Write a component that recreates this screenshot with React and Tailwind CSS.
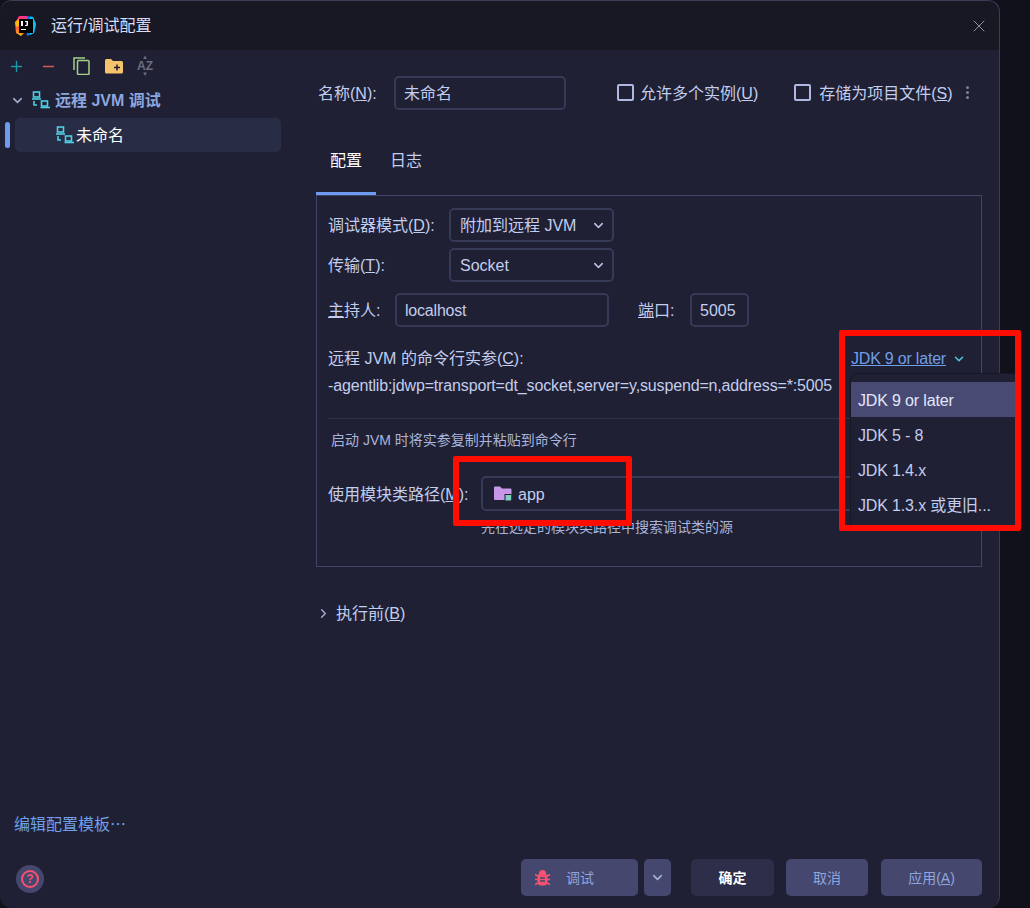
import { ChevronDown, ChevronRight, Plus, Minus, X } from 'lucide-react';

function JetBrainsLogo() {
  return (
    <svg width="22" height="22" viewBox="0 0 22 22" className="shrink-0">
      <defs>
        <linearGradient id="ijLeft" x1="0" y1="0" x2="0" y2="1">
          <stop offset="0" stopColor="#ff318c" />
          <stop offset="0.5" stopColor="#ff4a4a" />
          <stop offset="1" stopColor="#fdb60d" />
        </linearGradient>
      </defs>
      <path d="M12 1 L19 2 L22 9 L20 18 L13 21 Z" fill="#087cfa" />
      <path d="M16 1.500 L19 2 L22 9 L20 18 L16 20 Z" fill="#07c3f2" />
      <path d="M5 1 L13 1 L12 16 L7 21 L2 18 L1 8 Z" fill="url(#ijLeft)" />
      <path d="M1 7 L5 4 L5 11 L2 12 Z" fill="#fdb60d" />
      <rect x="5" y="4" width="14" height="14" fill="#000" />
      <rect x="7" y="6" width="2" height="5" fill="#fff" />
      <path d="M11 6 h3 v4 q0 1 -1 1 h-2 v-1 h1.500 v-3 h-1.500 z" fill="#fff" />
      <rect x="7" y="14" width="5" height="1" fill="#fff" />
    </svg>
  );
}

function RemoteIcon() {
  return (
    <svg width="18" height="18" viewBox="0 0 18 18" fill="none" stroke="#4fd0e4" strokeWidth="1.600" className="shrink-0">
      <rect x="1.500" y="1" width="6" height="5" />
      <path d="M0 8 H9" />
      <path d="M2 10 V14 H5" />
      <rect x="9.500" y="10" width="6" height="5" />
      <path d="M8.500 16.500 H18" />
    </svg>
  );
}

function CopyIcon() {
  return (
    <svg width="18" height="18" viewBox="0 0 18 18" fill="none" stroke="#a6d189" strokeWidth="1.500">
      <rect x="4.500" y="3.500" width="11.500" height="14" rx="1" />
      <path d="M1 13 V1 H12" />
    </svg>
  );
}

function NewFolderIcon() {
  return (
    <svg width="18" height="16" viewBox="0 0 18 16">
      <path d="M0 2.500 Q0 1 1.500 1 H6 L8 3 H16.500 Q18 3 18 4.500 V14 Q18 15.500 16.500 15.500 H1.500 Q0 15.500 0 14 Z" fill="#f5c36b" />
      <path d="M12 6.500 V12.500 M9 9.500 H15" stroke="#1e1e2e" strokeWidth="1.500" />
    </svg>
  );
}

function ModuleFolderIcon() {
  return (
    <svg width="18" height="15" viewBox="0 0 18 15" className="shrink-0">
      <path d="M0 1.500 Q0 0.500 1 0.500 H6 L8 2.500 H16.500 Q17.500 2.500 17.500 3.500 V13 Q17.500 14 16.500 14 H1 Q0 14 0 13 Z" fill="#c796e6" />
      <rect x="10.500" y="8" width="7" height="7" fill="#1e1e2e" />
      <rect x="11.500" y="9" width="5.500" height="5.500" fill="#7fd1bb" />
    </svg>
  );
}

function BugIcon() {
  return (
    <svg width="15" height="16" viewBox="0 0 15 16" className="shrink-0">
      <rect x="2.500" y="3.500" width="10" height="12" rx="3.500" fill="#f7526f" />
      <circle cx="7.500" cy="3.500" r="3.500" fill="#f7526f" />
      <path d="M0 4.500 L3 6 M15 4.500 L12 6 M0 9.500 H3 M15 9.500 H12 M0 14.500 L3 13 M15 14.500 L12 13" stroke="#f7526f" strokeWidth="1.600" />
      <path d="M5 8 H10 M5 11 H10" stroke="#45476f" strokeWidth="1.400" />
    </svg>
  );
}

function Checkbox({ label, mnemonic, className }) {
  return (
    <div className={`flex items-center ${className}`}>
      <div className="w-[17px] h-[17px] rounded-[2px] border-2 border-[#aeb8e0]" />
      <span className="pt-[2px]">{label}(<u>{mnemonic}</u>)</span>
    </div>
  );
}

function Select({ value, className }) {
  return (
    <div className={`h-[34px] flex items-center justify-between pl-[9px] pr-[6px] rounded-[5px] border-2 border-[#373a57] ${className}`}>
      <span className="pt-[2px]">{value}</span>
      <ChevronDown size={15} strokeWidth={2.400} className="text-[#bac2de]" />
    </div>
  );
}

function TextBox({ value, className }) {
  return (
    <div className={`h-[34px] flex items-center pt-[2px] px-[8px] rounded-[5px] border-2 border-[#373a57] ${className}`}>{value}</div>
  );
}

function FooterButton({ children, className }) {
  return (
    <button className={`h-[37px] flex items-center justify-center rounded-[5px] text-[14px] ${className}`}>{children}</button>
  );
}

const jdkOptions = ['JDK 9 or later', 'JDK 5 - 8', 'JDK 1.4.x', 'JDK 1.3.x 或更旧...'];

export default function App() {
  return (
    <div className="relative w-[1030px] h-[908px] overflow-hidden bg-[#11111b] text-[16px] leading-none text-[#c3cdee] font-['Liberation_Sans','Noto_Sans_CJK_SC',sans-serif]">
      <div className="w-[1000px] h-full flex flex-col rounded-[12px] border-r border-t border-[#3b3d54] bg-[#1f2033]">
        {/* title bar */}
        <div className="h-[49px] shrink-0 flex items-center rounded-t-[12px] bg-[#181825] pl-[14px] pr-[10px]">
          <JetBrainsLogo />
          <span className="ml-[15px] flex-1 text-[#d5dcf5]">运行/调试配置</span>
          <X size={20} strokeWidth={1.200} className="text-[#8e90a6]" />
        </div>

        <div className="flex-1 flex min-h-0">
          {/* left tree */}
          <div className="w-[300px] shrink-0 flex flex-col">
            <div className="h-[32px] flex items-center">
              <div className="w-[32px] flex justify-center"><Plus size={17} strokeWidth={2} className="text-[#1a98a8]" /></div>
              <div className="w-[33px] flex justify-center"><Minus size={17} strokeWidth={2} className="text-[#d65a5a]" /></div>
              <div className="w-[33px] flex justify-center"><CopyIcon /></div>
              <div className="w-[32px] flex justify-center"><NewFolderIcon /></div>
              <div className="w-[30px] flex flex-col items-center text-[12px] font-bold text-[#6c6e80] leading-[12px]">
                <span className="text-[6px] leading-[5px]">▲</span>
                <span>AZ</span>
                <span className="text-[6px] leading-[5px]">▼</span>
              </div>
            </div>
            <div className="mt-px h-[34px] flex items-center pl-[10px]">
              <ChevronDown size={15} strokeWidth={2.400} className="text-[#a6aed0]" />
              <span className="ml-[7px]"><RemoteIcon /></span>
              <span className="ml-[5px] pt-[2px] font-bold text-[#8ea6de]">远程 JVM 调试</span>
            </div>
            <div className="h-[35px] flex items-end pl-[5px]">
              <div className="w-[5px] h-[26px] mb-[4px] rounded-full bg-[#6d9bef]" />
              <div className="ml-[5px] w-[266px] h-[34px] flex items-center pl-[41px] rounded-[5px] bg-[#292c45] text-white">
                <RemoteIcon />
                <span className="ml-[2px] pt-[2px]">未命名</span>
              </div>
            </div>
            <div className="mt-auto pl-[14px] pb-[26px] text-[#6f9fe8]">编辑配置模板⋯</div>
          </div>

          {/* right form */}
          <div className="flex-1 pl-[16px] pr-[19px] pt-[25px]">
            <div className="flex items-center h-[35px]">
              <span className="w-[78px] pl-[2px] pt-[2px]">名称(<u>N</u>):</span>
              <TextBox value="未命名" className="w-[172px]" />
              <Checkbox label="允许多个实例" mnemonic="U" className="ml-[51px] gap-[6px]" />
              <Checkbox label="存储为项目文件" mnemonic="S" className="ml-[36px] gap-[8px]" />
              <div className="ml-[13px] flex flex-col gap-[2px]">
                <div className="w-[3px] h-[3px] rounded-full bg-[#7f8194]" />
                <div className="w-[3px] h-[3px] rounded-full bg-[#7f8194]" />
                <div className="w-[3px] h-[3px] rounded-full bg-[#7f8194]" />
              </div>
            </div>

            <div className="mt-[30px] flex h-[55px]">
              <div className="w-[60px] h-full flex items-center justify-center text-white border-b-[3px] border-[#6d9bef] pb-[10px]">配置</div>
              <div className="w-[60px] h-full flex items-center justify-center border-b-[3px] border-transparent pb-[10px]">日志</div>
            </div>

            <div className="relative h-[372px] border border-[#41446a] pl-[11px] pr-[10px] pt-[12px]">
              <div className="flex items-center">
                <span className="w-[121px] pt-[2px]">调试器模式(<u>D</u>):</span>
                <Select value="附加到远程 JVM" className="w-[165px]" />
              </div>
              <div className="flex items-center mt-[6px]">
                <span className="w-[121px] pt-[2px]">传输(<u>T</u>):</span>
                <Select value="Socket" className="w-[165px]" />
              </div>
              <div className="flex items-center mt-[11px]">
                <span className="w-[67px] pt-[2px]"><u>主</u>持人:</span>
                <TextBox value="localhost" className="w-[214px] tracking-[-0.2px]" />
                <span className="ml-[29px] w-[52px] pt-[2px]"><u>端</u>口:</span>
                <TextBox value="5005" className="w-[59px]" />
              </div>

              <div className="mt-[22px] flex items-center justify-between h-[18px] pt-[2px]">
                <span>远程 JVM 的命令行实参(<u>C</u>):</span>
                <span className="flex items-center mr-[5px] text-[#6f9fe8] tracking-[-0.2px]">
                  <u>JDK 9 or later</u>
                  <ChevronDown size={14} strokeWidth={2.600} className="ml-[6px] text-[#4ec9dc]" />
                </span>
              </div>
              <div className="mt-[9px] h-[43px] pt-[2px] border-b border-[#2f3149] tracking-[-0.15px]">-agentlib:jdwp=transport=dt_socket,server=y,suspend=n,address=*:5005</div>
              <div className="mt-[14px] pl-[3px] text-[14px] text-[#a9b4dc]">启动 JVM 时将实参复制并粘贴到命令行</div>

              <div className="mt-[29px] flex items-center">
                <span className="w-[153px] pt-[2px]">使用模块类路径(<u>M</u>):</span>
                <div className="w-[490px] h-[35px] flex items-center pl-[11px] rounded-[5px] border-2 border-[#373a57]">
                  <ModuleFolderIcon />
                  <span className="ml-[6px] pt-[2px]">app</span>
                </div>
              </div>
              <div className="mt-[9px] pl-[153px] text-[14px] text-[#a9b4dc]">先在选定的模块类路径中搜索调试类的源</div>

              {/* open JDK popup */}
              <div className="absolute left-[533px] top-[177px] w-[170px] h-[158px] pt-[8px] rounded-[8px] border border-[#181825] bg-[#1f2033] tracking-[-0.15px]">
                {jdkOptions.map((o, i) => (
                  <div key={o} className={`h-[35px] flex items-center pt-[2px] pl-[7px] ${i === 0 ? 'bg-[#484a74] text-[#e2e7fa]' : ''}`}>{o}</div>
                ))}
              </div>
            </div>

            <div className="mt-[37px] flex items-center">
              <ChevronRight size={15} strokeWidth={2.200} className="text-[#a6aed0]" />
              <span className="ml-[5px] pt-[2px]">执行前(<u>B</u>)</span>
            </div>
          </div>
        </div>

        {/* footer */}
        <div className="h-[49px] shrink-0 flex items-start pl-[16px]">
          <div className="mt-[6px] w-[28px] h-[28px] rounded-full bg-[#45476f] flex items-center justify-center">
            <div className="w-[18px] h-[18px] rounded-full border-2 border-[#f7526f] flex items-center justify-center text-[12px] font-bold text-[#f7526f]">?</div>
          </div>
          <FooterButton className="ml-[477px] w-[117px] !justify-start pl-[14px] bg-[#45476f] text-[#8ea6de] gap-[16px]">
            <BugIcon />
            <span>调试</span>
          </FooterButton>
          <FooterButton className="ml-[6px] w-[27px] bg-[#45476f] text-[#a6b4e0]">
            <ChevronDown size={15} strokeWidth={2.400} />
          </FooterButton>
          <FooterButton className="ml-[20px] w-[83px] bg-[#2c2e4a] text-white font-bold">确定</FooterButton>
          <FooterButton className="ml-[12px] w-[82px] bg-[#45476f] text-[#8ea6de]">取消</FooterButton>
          <FooterButton className="ml-[13px] w-[101px] bg-[#45476f] text-[#8ea6de]"><span>应用(<u>A</u>)</span></FooterButton>
        </div>
      </div>

      {/* red annotation boxes */}
      <div className="absolute left-[839px] top-[330px] w-[182px] h-[201px] rounded-[2px] border-[6px] border-[#ff0d00]" />
      <div className="absolute left-[453px] top-[456px] w-[179px] h-[70px] rounded-[2px] border-[6px] border-[#ff0d00]" />
    </div>
  );
}
